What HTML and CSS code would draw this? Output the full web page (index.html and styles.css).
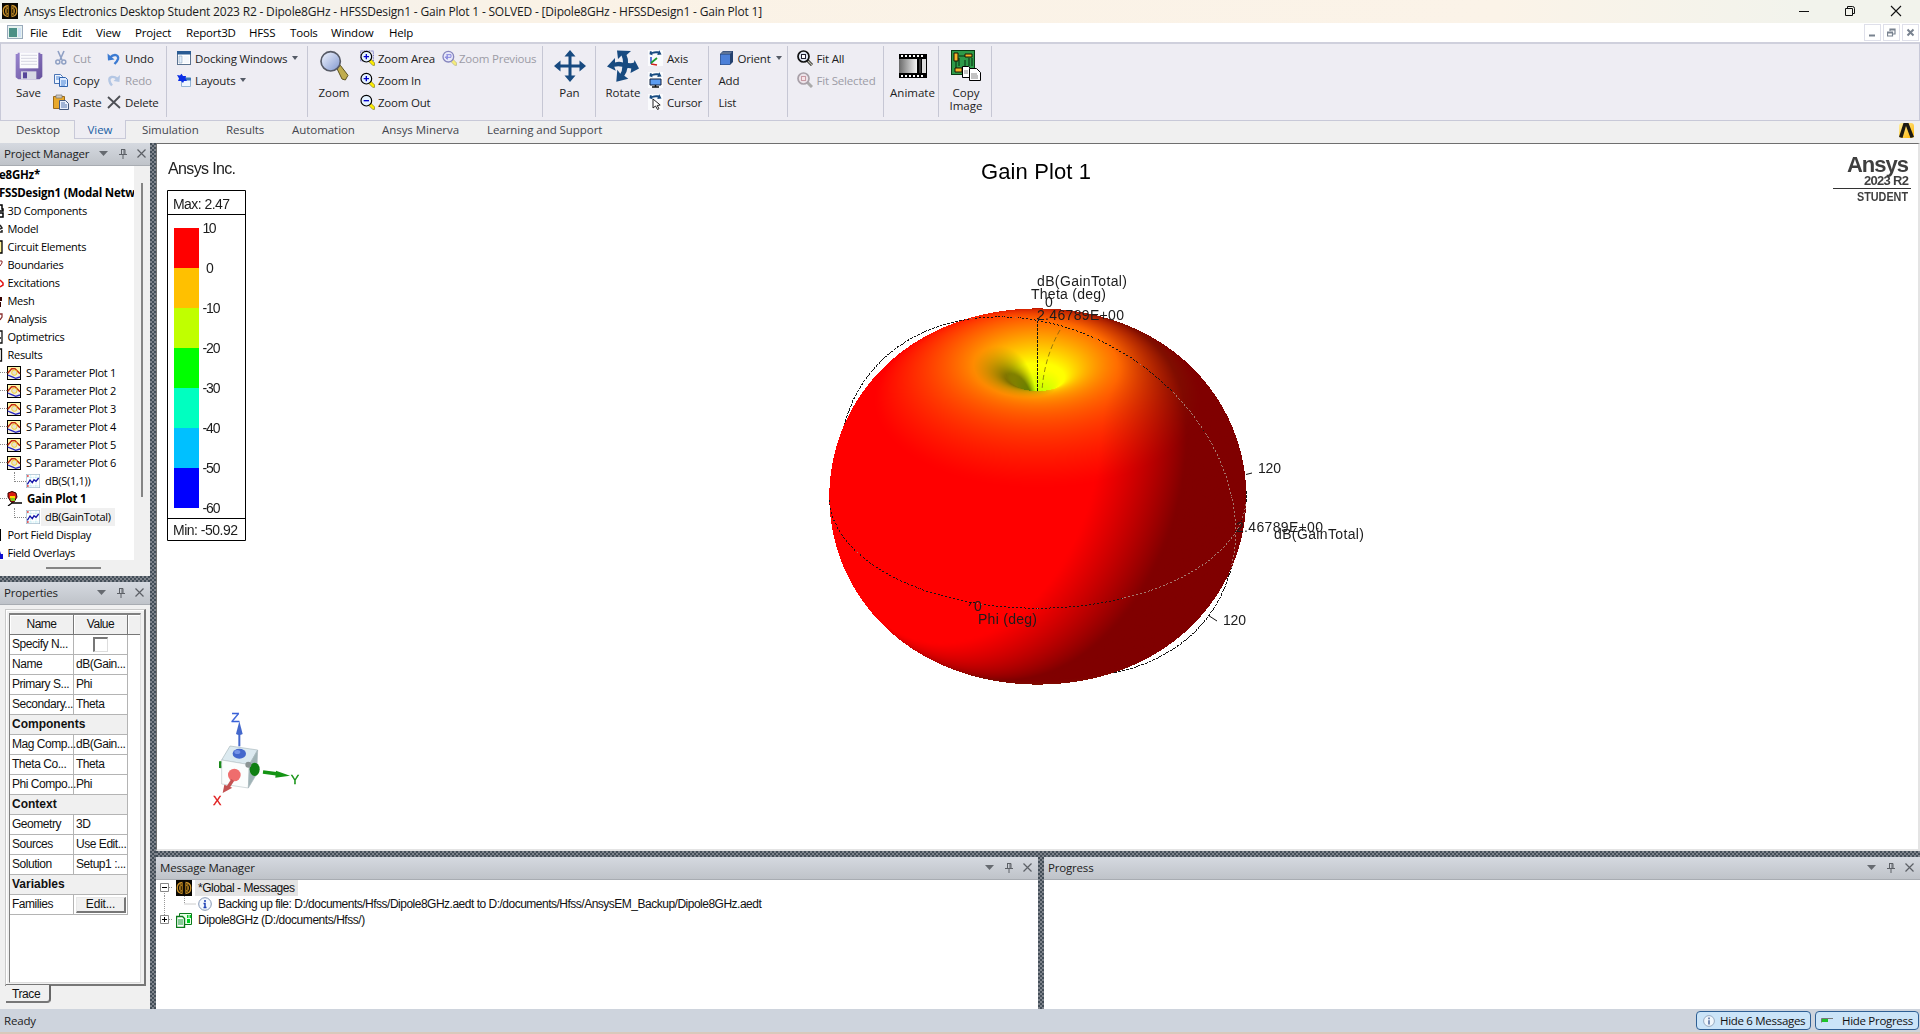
FILE: index.html
```html
<!DOCTYPE html>
<html lang="en">
<head>
<meta charset="utf-8">
<title>Ansys Electronics Desktop Student 2023 R2</title>
<link rel="stylesheet" href="styles.css">
</head>
<body>
<svg class="defs" width="0" height="0">
  <defs>
    <linearGradient id="gLens" x1="0" y1="0" x2="1" y2="1"><stop offset="0" stop-color="#f4f7ff"/><stop offset="1" stop-color="#7f96cf"/></linearGradient>
    <linearGradient id="gSave" x1="0" y1="0" x2="1" y2="1"><stop offset="0" stop-color="#9a86cf"/><stop offset="1" stop-color="#66519c"/></linearGradient>
    <linearGradient id="gFilm" x1="0" y1="0" x2="1" y2="0"><stop offset="0" stop-color="#6a6a6a"/><stop offset="1" stop-color="#f4f4f4"/></linearGradient>
    <linearGradient id="gGold" x1="0" y1="0" x2="1" y2="1"><stop offset="0" stop-color="#fff0a0"/><stop offset="1" stop-color="#ffb400"/></linearGradient>
    <symbol id="antenna" viewBox="0 0 16 16"><rect width="16" height="16" fill="#0a0803"/><g fill="none" stroke="#c8902a" stroke-width="1.300"><path d="M6.500 2.500C-.5 3-.5 13 6.500 13.500M6 5C3 5.500 3 10.500 6 11M9.500 2.500C16.500 3 16.500 13 9.500 13.500M10 5C13 5.500 13 10.500 10 11"/><path d="M6.400 3v10M9.600 3v10M4.500 4v8M11.500 4v8" stroke="#8a6214"/></g></symbol>
    <symbol id="menuarrow" viewBox="0 0 9 5"><path d="M0 0h9L4.500 5z" fill="#666a70"/></symbol>
    <symbol id="pin" viewBox="0 0 8 10"><path d="M2 .5h4v5M2.500 0v5.500M5 1v5M0 5.500h8M4 6v4" fill="none" stroke="#5c6066"/></symbol>
    <symbol id="cross" viewBox="0 0 9 9"><path d="M.5.5l8 8M8.500.5l-8 8" fill="none" stroke="#5c6066" stroke-width="1.200"/></symbol>
    <symbol id="rotarrow" viewBox="0 0 15 7"><path d="M1 1.500h2v1c3-1.200 6-1.200 8-.8l1-1.500 2.500 5-5 .5.8-1.600c-2-.6-4-.6-6.500.4l.2 1.500-3.500-1z" fill="#174a80"/></symbol>
    <symbol id="mag" viewBox="0 0 45 48"><path d="M29 30l3-3 12 12v7h-6L26 34z" fill="#ffee00" stroke="#77741c" stroke-width="2"/><circle cx="19" cy="20" r="16" fill="#e4f2ff" stroke="#000" stroke-width="3.500"/></symbol>
    <symbol id="splot" viewBox="0 0 42 42"><rect x="1.500" y="1.500" width="39" height="39" fill="#fff6a8" stroke="#000" stroke-width="3"/><path d="M3 26c6-12 12-16 18-16s12 6 18 12v17H3z" fill="#f4efdc"/><path d="M2 22L14 8h10l15 15" fill="none" stroke="#c22a10" stroke-width="4.500"/><circle cx="22" cy="20" r="8" fill="#e7e2cc" stroke="#f2d030" stroke-width="3"/><path d="M2 27l12 5 12 5 13-4" fill="none" stroke="#2222c0" stroke-width="4"/></symbol>
    <symbol id="trace" viewBox="0 0 42 42"><rect x="1" y="1" width="40" height="40" fill="#fff" stroke="#9fb6c8" stroke-width="2"/><path d="M2 10h38M2 36h38M14 2v38M30 2v38" stroke="#8fdde8" stroke-width="2" stroke-dasharray="3 3"/><path d="M4 31l8-13 7 8 5-9 6 5 8-10" fill="none" stroke="#1414a8" stroke-width="4"/><path d="M3 4h5v4H3zM3 34h5v4H3z" fill="#e03030"/></symbol>
  </defs>
</svg>
<div class="app">
  <header class="titlebar">
    <svg class="appicon" width="16" height="16"><use href="#antenna"/></svg>
    <span class="apptitle">Ansys Electronics Desktop Student 2023 R2 - Dipole8GHz - HFSSDesign1 - Gain Plot 1 - SOLVED - [Dipole8GHz - HFSSDesign1 - Gain Plot 1]</span>
    <div class="winbtns">
      <svg width="12" height="12"><path d="M1 6.500h10" stroke="#111"/></svg>
      <svg width="12" height="12"><path d="M1.500 3.500h7v7h-7zM3.500 3V1.500h5q2 0 2 2v5H9" fill="none" stroke="#111"/></svg>
      <svg width="12" height="12"><path d="M1 1l10 10M11 1L1 11" stroke="#111" stroke-width="1.100"/></svg>
    </div>
  </header>
  <nav class="menubar">
    <svg class="docicon" width="16" height="14" viewBox="0 0 16 14"><rect x=".5" y=".5" width="15" height="13" fill="#e6f2f0" stroke="#9ab"/><rect x="2" y="3" width="8" height="9" fill="#4a8f86"/><rect x="11" y="3" width="3" height="9" fill="#cfe0f4"/></svg>
    <span class="m1">File</span><span class="m2">Edit</span><span class="m3">View</span><span class="m4">Project</span><span class="m5">Report3D</span><span class="m6">HFSS</span><span class="m7">Tools</span><span class="m8">Window</span><span class="m9">Help</span>
    <div class="mdibtns">
      <i><svg width="9" height="9"><path d="M1 7.500h6" stroke="#78828f" stroke-width="2"/></svg></i>
      <i><svg width="9" height="9"><path d="M.5 4h5v4h-5zM.5 5h5M3 3V1h5v5H6M3 1.800h5" fill="none" stroke="#78828f" stroke-width="1.200"/></svg></i>
      <i><svg width="9" height="9"><path d="M1.500 1.500l6 6M7.500 1.500l-6 6" stroke="#78828f" stroke-width="2"/></svg></i>
    </div>
  </nav>
  <section class="ribbon">
    <div class="group g-edit">
      <div class="big"><svg width="28" height="28" viewBox="40 155 84 86"><path d="M42 162h6v-4h68v4h6v68l-8 8H50l-8-6z" fill="url(#gSave)"/><path d="M54 157h56v48H54z" fill="#fbfbfd"/><path d="M58 166h48M58 175h48M58 184h48M58 193h48" stroke="#c4c4d4" stroke-width="2"/><path d="M58 214h46v23H58z" fill="#d8d8e4"/><path d="M64 217h12v18H64z" fill="#57459a"/></svg><span>Save</span></div>
      <div class="col c-cut">
        <div class="it off"><svg width="16" height="16" viewBox="0 0 16 16"><path d="M5 1l4 9M11 1L7 10" stroke="#8fa0c4" stroke-width="1.600"/><circle cx="4.800" cy="12" r="2" fill="none" stroke="#8fa0c4" stroke-width="1.500"/><circle cx="10.800" cy="12" r="2" fill="none" stroke="#8fa0c4" stroke-width="1.500"/></svg><span>Cut</span></div>
        <div class="it"><svg width="16" height="16" viewBox="0 0 16 16"><path d="M1.500 2.500h6l2 2v7h-8z" fill="#eef5ff" stroke="#4a74b4"/><path d="M6.500 5.500h6l2 2v7h-8z" fill="#dceaff" stroke="#2f62ae"/><path d="M3 5h4M3 7h3M8 9h5M8 11h5M8 13h4" stroke="#4f86d4"/></svg><span>Copy</span></div>
        <div class="it"><svg width="16" height="16" viewBox="0 0 16 16"><path d="M.5 2.500h11v12H.5z" fill="#e9a92c" stroke="#9a6a1c"/><path d="M3 1h6v3H3z" fill="#cfc9bd" stroke="#777" stroke-width=".7"/><path d="M6.500 6.500h6l3 3v6h-9z" fill="#eaf0fb" stroke="#44597e"/><path d="M8 9h4M8 11h6M8 13h6" stroke="#5878b0"/></svg><span>Paste</span></div>
      </div>
      <div class="col c-undo">
        <div class="it"><svg width="14" height="14" viewBox="0 0 14 14"><path d="M3 6.500C7 2.500 12 3.500 11 8q-.5 2-3.500 5" fill="none" stroke="#3c7bd2" stroke-width="2.400"/><path d="M.5 2.500L1 9.500l6.500-1z" fill="#3c7bd2"/></svg><span>Undo</span></div>
        <div class="it off"><svg width="14" height="14" viewBox="0 0 14 14"><path d="M10.500 6C6.500 2.500 1.500 3.500 2.500 8q.3 2 2.500 4.500" fill="none" stroke="#b4c7e4" stroke-width="2.400"/><path d="M13 2l-.6 7L6.500 8z" fill="#b4c7e4"/></svg><span>Redo</span></div>
        <div class="it"><svg width="14" height="14" viewBox="0 0 14 14"><path d="M1 2l12 11M13 1L1 13" stroke="#4d4f55" stroke-width="1.800"/></svg><span>Delete</span></div>
      </div>
    </div>
    <div class="group g-dock">
      <div class="col">
        <div class="it"><svg width="14" height="14" viewBox="0 0 14 14"><rect x=".5" y=".5" width="13" height="13" fill="#fff" stroke="#5c7390"/><path d="M0 0h14v3.500H0z" fill="#2a5c94"/><path d="M2 5h3v7H2z" fill="#e1eefa" stroke="#8ea6bf" stroke-width=".6"/><path d="M6.500 5H12v7H6.500z" fill="#f5f8fc"/></svg><span>Docking Windows</span><svg class="dd" width="6" height="4"><path d="M0 0h6L3 4z" fill="#555b66"/></svg></div>
        <div class="it"><svg width="14" height="14" viewBox="0 0 14 14"><path d="M4.500 4.500h9v9h-9z" fill="#eef6ff" stroke="#94b4d4"/><path d="M5 5h9v2.500H5z" fill="#3c78b8"/><path d="M0 2l3 .5L4.500.8 6 3h3l-.5 2.500L10 8H7l-1 2-2-2H1l1-2.500z" fill="#0a2ee6"/></svg><span>Layouts</span><svg class="dd" width="6" height="4"><path d="M0 0h6L3 4z" fill="#555b66"/></svg></div>
      </div>
    </div>
    <div class="group g-zoom">
      <div class="big"><svg width="30" height="32" viewBox="960 154 90 92"><path d="M1014 208l10-10 23 30-8 14-10-3z" fill="#c0ad4e" stroke="#5e5422" stroke-width="3"/><circle cx="995" cy="186" r="29" fill="url(#gLens)" stroke="#565a66" stroke-width="5"/></svg><span>Zoom</span></div>
      <div class="col c-za">
        <div class="it"><svg width="15" height="16" viewBox="0 0 45 48"><path d="M2 3h38v30H2z" fill="none" stroke="#2222aa" stroke-dasharray="3 2" stroke-width="2"/><use href="#mag" width="45" height="48"/><path d="M11 20h16M19 12v16" stroke="#00c" stroke-width="4"/></svg><span>Zoom Area</span></div>
        <div class="it"><svg width="15" height="16" viewBox="0 0 45 48"><use href="#mag" width="45" height="48"/><path d="M11 20h16M19 12v16" stroke="#00c" stroke-width="4"/></svg><span>Zoom In</span></div>
        <div class="it"><svg width="15" height="16" viewBox="0 0 45 48"><use href="#mag" width="45" height="48"/><path d="M11 20h16" stroke="#00c" stroke-width="4"/></svg><span>Zoom Out</span></div>
      </div>
      <div class="col c-zp"><div class="it off"><svg class="faded" width="15" height="16" viewBox="0 0 45 48"><path d="M29 30l3-3 12 12v7h-6L26 34z" fill="#ffee00" stroke="#77741c" stroke-width="2"/><circle cx="19" cy="20" r="16" fill="#e4e6ff" stroke="#22228a" stroke-width="4"/><path d="M10 22h17V14H13M10 22l6-6v12z" fill="none" stroke="#2222cc" stroke-width="3"/></svg><span>Zoom Previous</span></div></div>
    </div>
    <div class="group g-pan">
      <div class="big"><svg width="32" height="32" viewBox="0 0 32 32"><path d="M16 0l5.500 6.500H17.500V14.500h8V10.500L32 16l-6.500 5.500V17.500h-8v8h4L16 32l-5.500-6.500h4v-8h-8v4L0 16l6.500-5.500v4h8v-8h-4z" fill="#174a80"/></svg><span>Pan</span></div>
    </div>
    <div class="group g-rot">
      <div class="big"><svg width="32" height="32" viewBox="0 0 32 32"><path d="M10 .5L24 1l-4.500 4q2 4 1.500 8 4 .5 6-.5L27.500 10 32 18.500l-8.500 4.500.8-4.500q-2-.6-4-.3-.3 4-3 7.500l4 3-12 3 1-12 3 4q2-3 2-7-4-1-8 0l1.500 4L0 16.500 8 8v4.500q4-1.500 8 0 0-4-1.500-7L11 9z" fill="#174a80"/></svg><span>Rotate</span></div>
      <div class="col">
        <div class="it"><svg width="15" height="16" viewBox="0 0 15 16"><rect width="15" height="16" fill="#fafbfd"/><use href="#rotarrow" width="15" height="6"/><path d="M3 7v7" stroke="#2c50d0" stroke-width="1.500"/><path d="M3 14l6 1" stroke="#d02020" stroke-width="1.700"/><path d="M3 13l6-5" stroke="#1c9a2c" stroke-width="1.700"/></svg><span>Axis</span></div>
        <div class="it"><svg width="15" height="16" viewBox="0 0 15 16"><rect width="15" height="16" fill="#fafbfd"/><use href="#rotarrow" width="15" height="6"/><path d="M2 7h11v6H2z" fill="#5d9cf0" stroke="#102040"/><path d="M4 15h7M7.500 13v2" stroke="#111" stroke-width="1.500"/></svg><span>Center</span></div>
        <div class="it"><svg width="15" height="16" viewBox="0 0 15 16"><rect width="15" height="16" fill="#fafbfd"/><use href="#rotarrow" width="15" height="6"/><path d="M5 5v9l2.500-2 2 3.500 1.500-.8-1.800-3.200 3-.5z" fill="#fff" stroke="#222"/></svg><span>Cursor</span></div>
      </div>
    </div>
    <div class="group g-ori">
      <div class="col">
        <div class="it"><svg width="15" height="16" viewBox="0 0 15 16"><path d="M1 4l3-3h10v11l-3 3H1z" fill="#24416f"/><path d="M1.500 4.500h9.500v10H1.500z" fill="#4c80d8"/><path d="M1.500 4L4 1.500h9.500L11 4z" fill="#5d7396"/></svg><span>Orient</span><svg class="dd" width="6" height="4"><path d="M0 0h6L3 4z" fill="#555b66"/></svg></div>
        <div class="it"><span>Add</span></div>
        <div class="it"><span>List</span></div>
      </div>
    </div>
    <div class="group g-fit">
      <div class="col">
        <div class="it"><svg width="16" height="16" viewBox="0 0 16 16"><path d="M10 10l5 5" stroke="#222" stroke-width="3"/><path d="M11 11l4 4" stroke="#b8b8a8" stroke-width="1.200"/><circle cx="6.500" cy="6.500" r="5.500" fill="#dfe6f2" stroke="#111" stroke-width="1.700"/><rect x="4.500" y="4.500" width="4" height="4" fill="#fff" stroke="#223"/></svg><span>Fit All</span></div>
        <div class="it off"><svg width="16" height="16" viewBox="0 0 16 16"><path d="M10 10l5 5" stroke="#aaa" stroke-width="3"/><circle cx="6.500" cy="6.500" r="5.500" fill="#ece2e8" stroke="#a8a0a8" stroke-width="1.700"/><rect x="4.500" y="4.500" width="4" height="4" fill="#f6e4e8" stroke="#c89aa4"/></svg><span>Fit Selected</span></div>
      </div>
    </div>
    <div class="group g-ani">
      <div class="big"><svg width="28" height="24" viewBox="0 0 28 24"><rect width="28" height="24" fill="#000"/><path d="M2 2h24M2 22h24" stroke="#fff" stroke-width="2" stroke-dasharray="2 2"/><rect y="5" width="18" height="14" fill="url(#gFilm)"/><rect x="20" y="5" width="2" height="14" fill="#333"/><rect x="23" y="5" width="4" height="14" fill="#ddd"/></svg><span>Animate</span></div>
    </div>
    <div class="group g-cpy">
      <div class="big"><svg width="30" height="32" viewBox="0 0 30 32"><rect x=".5" y=".5" width="23" height="24" fill="#2e9a48" stroke="#0a3a14"/><path d="M8 6h6M8 8v8M5 10v8M14 10v6M18 8v8M21 8v8M8 19h6" stroke="#062a0c" stroke-width="1"/><path d="M3 3h4v8H3zM14 4h7v3h-7zM4 18h7v4H4z" fill="#f6b32a" stroke="#1c1400"/><path d="M11.500 16.500h6l2 2v9h-8z" fill="#fff" stroke="#000"/><path d="M18.500 18.500h7l4 4v8h-11z" fill="#fff" stroke="#000"/><path d="M13 21h4M13 23h4M20 24h6M20 26h7M20 28h7" stroke="#888"/></svg><span>Copy<br>Image</span></div>
    </div>
  </section>
  <nav class="tabs">
    <span class="t1">Desktop</span><span class="active">View</span><span class="t3">Simulation</span><span class="t4">Results</span><span class="t5">Automation</span><span class="t6">Ansys Minerva</span><span class="t7">Learning and Support</span>
    <svg class="ansyslogo" width="17" height="17" viewBox="0 0 17 17"><rect x="1" y="1" width="15" height="15" rx="3" fill="url(#gGold)"/><path d="M5.500 1h5L16 15l-3.500 1L8 4 4.500 16 1 15z" fill="#1c1a12"/></svg>
  </nav>
  <main class="workspace">
    <aside class="left">
      <div class="phead"><span>Project Manager</span><svg width="9" height="5"><use href="#menuarrow"/></svg><svg width="8" height="10"><use href="#pin"/></svg><svg width="9" height="9"><use href="#cross"/></svg></div>
      <div class="treewrap">
        <div class="tree">
          <div class="row b r-root"><span>e8GHz*</span></div>
          <div class="row b r-des"><span>FSSDesign1 (Modal Netw</span></div>
          <div class="row"><svg width="4" height="14"><path d="M0 1h2v4h1v2H0M0 9h3v4H0" fill="none" stroke="#000" stroke-width="1.500"/></svg><span>3D Components</span></div>
          <div class="row"><svg width="4" height="14"><path d="M0 3l2 3-2 1M0 10h2v-2" fill="none" stroke="#222" stroke-width="1.500"/></svg><span>Model</span></div>
          <div class="row"><svg width="4" height="14"><path d="M0 1h2v12H0" fill="#fff29a" stroke="#000" stroke-width="1.300"/></svg><span>Circuit Elements</span></div>
          <div class="row"><svg width="4" height="14"><path d="M0 3h2v2L0 8" fill="none" stroke="#8a2020"/></svg><span>Boundaries</span></div>
          <div class="row"><svg width="4" height="14"><path d="M0 4l3 3v2l-3 2" fill="none" stroke="#e01010" stroke-width="1.500"/></svg><span>Excitations</span></div>
          <div class="row"><svg width="4" height="14"><path d="M0 3h2v4H0zM0 8h1v5H0z" fill="#300"/></svg><span>Mesh</span></div>
          <div class="row"><svg width="4" height="14"><path d="M0 2h2v3L0 8" fill="none" stroke="#8a3030" stroke-width="1.300"/></svg><span>Analysis</span></div>
          <div class="row"><svg width="4" height="14"><path d="M0 1h2v12H0M0 8h1" fill="none" stroke="#111" stroke-width="1.300"/></svg><span>Optimetrics</span></div>
          <div class="row"><svg width="4" height="14"><path d="M0 1h1.500v12H0" fill="none" stroke="#111" stroke-width="1.300"/></svg><span>Results</span></div>
          <div class="row plot"><i></i><svg width="14" height="14"><use href="#splot"/></svg><span>S Parameter Plot 1</span></div>
          <div class="row plot"><i></i><svg width="14" height="14"><use href="#splot"/></svg><span>S Parameter Plot 2</span></div>
          <div class="row plot"><i></i><svg width="14" height="14"><use href="#splot"/></svg><span>S Parameter Plot 3</span></div>
          <div class="row plot"><i></i><svg width="14" height="14"><use href="#splot"/></svg><span>S Parameter Plot 4</span></div>
          <div class="row plot"><i></i><svg width="14" height="14"><use href="#splot"/></svg><span>S Parameter Plot 5</span></div>
          <div class="row plot"><i></i><svg width="14" height="14"><use href="#splot"/></svg><span>S Parameter Plot 6</span></div>
          <div class="row sub"><i></i><svg width="14" height="14"><use href="#trace"/></svg><span>dB(S(1,1))</span></div>
          <div class="row b plot"><i></i><svg width="15" height="15" viewBox="0 0 15 15"><path d="M5 9v3l-4 3M5 12h10" fill="none" stroke="#000" stroke-width="1.300"/><path d="M1 2q4-3 8 0l1 4-3 5H4L1 6z" fill="#d81c10" stroke="#300"/><path d="M3 6h5v4H4z" fill="#7ac81c"/><path d="M3 5h5v2H3z" fill="#ffd400"/></svg><span>Gain Plot 1</span></div>
          <div class="row sub sel"><i></i><svg width="14" height="14"><use href="#trace"/></svg><span>dB(GainTotal)</span></div>
          <div class="row"><svg width="4" height="14"><path d="M0 1h1v12H0z"/></svg><span>Port Field Display</span></div>
          <div class="row"><svg width="4" height="14"><path d="M0 5l1 3h2v5H0z" fill="#1010d0"/></svg><span>Field Overlays</span></div>
        </div>
        <div class="vbar"></div>
      </div>
      <div class="hbarbox"><div class="hbar"></div></div>
      <div class="hsplit"></div>
      <div class="phead"><span>Properties</span><svg width="9" height="5"><use href="#menuarrow"/></svg><svg width="8" height="10"><use href="#pin"/></svg><svg width="9" height="9"><use href="#cross"/></svg></div>
      <div class="props">
        <div class="sheet">
          <div class="grid">
            <div class="hrow"><b>Name</b><b>Value</b><b></b></div>
            <div class="prow"><span>Specify N...</span><span class="chk"><i></i></span></div>
            <div class="prow"><span>Name</span><span>dB(Gain...</span></div>
            <div class="prow"><span>Primary S...</span><span>Phi</span></div>
            <div class="prow"><span>Secondary...</span><span>Theta</span></div>
            <div class="crow">Components</div>
            <div class="prow"><span>Mag Comp...</span><span>dB(Gain...</span></div>
            <div class="prow"><span>Theta Co...</span><span>Theta</span></div>
            <div class="prow"><span>Phi Compo...</span><span>Phi</span></div>
            <div class="crow">Context</div>
            <div class="prow"><span>Geometry</span><span>3D</span></div>
            <div class="prow"><span>Sources</span><span>Use Edit...</span></div>
            <div class="prow"><span>Solution</span><span>Setup1 :...</span></div>
            <div class="crow">Variables</div>
            <div class="prow"><span>Families</span><span class="bt"><em>Edit...</em></span></div>
          </div>
        </div>
        <div class="ttab">Trace</div>
      </div>
    </aside>
    <div class="vsplit"></div>
    <div class="right">
      <section class="view">
        <canvas id="pattern" class="pattern" width="440" height="400"></canvas>
        <svg class="overlay" width="1762" height="706" viewBox="157 144 1762 706">
          <g class="arial">
            <text x="168" y="174" font-size="16" textLength="68" fill="#222">Ansys Inc.</text>
            <text x="981" y="179" font-size="22" textLength="110" fill="#000">Gain Plot 1</text>
            <path d="M167.500 190.500h78v350h-78zM167 214.500h79M167 518.500h79" fill="none" stroke="#000"/>
            <text x="173" y="209" font-size="14" textLength="57">Max: 2.47</text>
            <text x="173" y="535" font-size="14" textLength="65">Min: -50.92</text>
            <g stroke="none"><path d="M174 228h25v40h-25z" fill="#f00"/><path d="M174 268h25v40h-25z" fill="#ffc000"/><path d="M174 308h25v40h-25z" fill="#c0ff00"/><path d="M174 348h25v40h-25z" fill="#0f0"/><path d="M174 388h25v40h-25z" fill="#00ffc0"/><path d="M174 428h25v40h-25z" fill="#00c0ff"/><path d="M174 468h25v40h-25z" fill="#00f"/></g>
            <g font-size="14"><text x="202.500" y="233" textLength="14">10</text><text x="206" y="273">0</text><text x="202.500" y="313" textLength="18">-10</text><text x="202.500" y="353" textLength="18">-20</text><text x="202.500" y="393" textLength="18">-30</text><text x="202.500" y="433" textLength="18">-40</text><text x="202.500" y="473" textLength="18">-50</text><text x="202.500" y="513" textLength="18">-60</text></g>
            <g font-size="14">
              <text x="1037" y="285.500" textLength="90">dB(GainTotal)</text>
              <text x="1031" y="298.500" textLength="75">Theta (deg)</text>
              <text x="1045" y="306.500">0</text>
              <text x="1037" y="319.500" textLength="87">2.46789E+00</text>
              <text x="1258" y="472.500" textLength="23">120</text>
              <text x="1236" y="531.500" textLength="87">2.46789E+00</text>
              <text x="1274" y="538.500" textLength="90">dB(GainTotal)</text>
              <text x="1223" y="624.500" textLength="23">120</text>
              <text x="974" y="610.500">0</text>
              <text x="978" y="623.500" textLength="59">Phi (deg)</text>
            </g>
            <path d="M1246 474.500l6-1.500M1208.500 615.500l8.500 5.500M969 606l2.500-4" stroke="#111" fill="none"/>
            <path d="M1060 330q-16 28-18 61" stroke="#6b5a10" stroke-opacity=".7" stroke-dasharray="5 3" fill="none"/>
            <g font-weight="bold" fill="#3f3f3f"><text x="1847" y="172" font-size="22" textLength="62">Ansys</text><text x="1864" y="185" font-size="13" textLength="45">2023 R2</text><text x="1857" y="201" font-size="13" textLength="51" lengthAdjust="spacingAndGlyphs">STUDENT</text></g>
            <path d="M1833 188.500h78" stroke="#333"/>
          </g>
        </svg>
        <svg class="triad" width="107" height="100" viewBox="600 400 321 300">
          <path d="M660 560v20M665 560q-6 8 0 20" stroke="#1a8a1a" stroke-width="6" fill="none"/>
          <path d="M665 556l25-42 83 12-25 44z" fill="#dceaf0" stroke="#a9b8bd" stroke-width="2"/>
          <path d="M665 556l83 14-3 70-80-12z" fill="#fbfdfd" stroke="#bcc8cc" stroke-width="2"/>
          <path d="M748 570l25-44-3 72-25 42z" fill="#9fb3b6" stroke="#a9b8bd" stroke-width="2"/>
          <ellipse cx="764" cy="584" rx="15" ry="20" fill="#0f7f12"/>
          <circle cx="745" cy="570" r="9" fill="#8b9494"/>
          <ellipse cx="718" cy="537" rx="20" ry="15" fill="#4468cc"/><ellipse cx="712" cy="532" rx="9" ry="6" fill="#7492e6"/>
          <path d="M718 515v-42" stroke="#4468cc" stroke-width="6"/><path d="M708 478l10-38 10 38q-10 6-20 0z" fill="#4468cc"/>
          <circle cx="703" cy="601" r="19" fill="#ef6d6d"/><path d="M698 616l-14 22" stroke="#c35252" stroke-width="10"/><path d="M673 630l24 9-29 16z" fill="#c35252"/>
          <path d="M789 592l45 6" stroke="#149414" stroke-width="10"/><path d="M828 588l42 15-44 6z" fill="#149414"/>
          <text x="694" y="441" font-size="41" fill="#3a62d8" stroke="#3a62d8">Z</text><text x="872" y="627" font-size="38" fill="#109010" stroke="#109010">Y</text><text x="639" y="690" font-size="38" fill="#e01818" stroke="#e01818">X</text>
        </svg>
      </section>
      <div class="hsplit"></div>
      <div class="bottom">
        <section class="msgs">
          <div class="phead"><span>Message Manager</span><svg width="9" height="5"><use href="#menuarrow"/></svg><svg width="8" height="10"><use href="#pin"/></svg><svg width="9" height="9"><use href="#cross"/></svg></div>
          <div class="mtree">
            <div class="mrow"><svg width="16" height="16"><path d="M4.500 3.500h8v8h-8z" fill="#fff" stroke="#888"/><path d="M6 7.500h5" stroke="#000"/><path d="M13 7.500h3M8.500 13v3" stroke="#999" stroke-dasharray="1 1"/></svg><svg class="gap4" width="16" height="16"><use href="#antenna"/></svg><span class="gl">*Global - Messages</span></div>
            <div class="mrow"><svg width="42" height="16"><path d="M8.500 0v16M28.500 0v8h12" stroke="#999" fill="none" stroke-dasharray="1 1"/></svg><svg width="14" height="14" viewBox="0 0 14 14"><circle cx="7" cy="7" r="6.300" fill="#f4f8fd" stroke="#8496b4"/><path d="M7 3v2M5.500 6.500H7v4M5.500 10.500h3" stroke="#1c3fb4" stroke-width="1.500" fill="none"/></svg><span class="bk">Backing up file: D:/documents/Hfss/Dipole8GHz.aedt to D:/documents/Hfss/AnsysEM_Backup/Dipole8GHz.aedt</span></div>
            <div class="mrow"><svg width="16" height="16"><path d="M4.500 3.500h8v8h-8z" fill="#fff" stroke="#888"/><path d="M6 7.500h5M8.500 5v5" stroke="#000"/><path d="M13 7.500h3M8.500 0v3" stroke="#999" stroke-dasharray="1 1"/></svg><svg class="gap4" width="16" height="15" viewBox="0 0 16 15"><path d="M3.500.5h12v11h-12z" fill="#eaffea" stroke="#0a7a1a"/><path d="M11 2h1.500v3H11zM13.500 2H15v3h-1.500zM11 6h3v4h-3z" fill="#0c2"/><path d="M.5 3.500h6l2 2v9h-8z" fill="#fff" stroke="#0a7a1a" stroke-width="1.400"/><path d="M2 7h5M2 9h5M2 11h5" stroke="#0a9a2a"/></svg><span class="dp">Dipole8GHz (D:/documents/Hfss/)</span></div>
          </div>
        </section>
        <div class="vsplit"></div>
        <section class="progress"><div class="phead"><span>Progress</span><svg width="9" height="5"><use href="#menuarrow"/></svg><svg width="8" height="10"><use href="#pin"/></svg><svg width="9" height="9"><use href="#cross"/></svg></div></section>
      </div>
    </div>
  </main>
  <footer class="status">
    <span>Ready</span>
    <div class="sbtn s1"><svg width="12" height="12" viewBox="0 0 14 14"><circle cx="7" cy="7" r="6.300" fill="#f0f6fc" stroke="#8ea0b8"/><path d="M7 3v2M7 6v5" stroke="#34518c" stroke-width="1.500"/></svg><em>Hide 6 Messages</em></div>
    <div class="sbtn s2"><svg width="12" height="6"><path d="M.5 4.500v-4H12" fill="none" stroke="#777"/><path d="M1 1h6v3H1z" fill="#1ec42a"/></svg><em>Hide Progress</em></div>
  </footer>
</div>
<script src="pattern.js"></script>
</body>
</html>
```

FILE: styles.css
```css
* { box-sizing: border-box; }
html { overflow: hidden; }
body { margin: 0; background: #f0f0f0; font-family: "Open Sans", "Noto Sans", sans-serif; font-size: 11.5px; letter-spacing: -0.18px; color: #1c1c22; }
.defs { position: absolute; }
.app { width: 1920px; height: 1034px; display: flex; flex-direction: column; overflow: hidden; }
span, em, b { white-space: nowrap; }
em { font-style: normal; }
svg { flex: none; display: block; }

.titlebar { height: 23px; flex: none; display: flex; align-items: center; padding: 0 18px 2px 2px; background: linear-gradient(90deg, #f0f3f0 0, #f4f2ec 300px, #faf2e6 520px, #fbf3e8 1500px, #f2f3ec 1800px); }
.apptitle { margin-left: 6px; color: #1a1a1a; font-size: 12px; letter-spacing: -0.19px; padding-top: 2px; }
.winbtns { margin-left: auto; display: flex; gap: 34px; }

.menubar { height: 19px; flex: none; background: #fff; display: flex; align-items: center; color: #000; padding-bottom: 1px; }
.docicon { margin: 0 7px; }
.menubar span { flex: none; }
.m1 { width: 32px; } .m2 { width: 34px; } .m3 { width: 39px; } .m4 { width: 51px; } .m5 { width: 63px; } .m6 { width: 41px; } .m7 { width: 41px; } .m8 { width: 58px; }
.mdibtns { margin-left: auto; display: flex; gap: 2px; padding-right: 1px; }
.mdibtns i { width: 17px; height: 17px; border: 1px solid #dfe0ea; background: #fff; display: flex; align-items: center; justify-content: center; }

.ribbon { height: 79px; flex: none; background: #eeedf3; border: 1px solid #c8c9d8; border-top: 2px solid #cfd0dc; display: flex; padding: 2px 0 4px; }
.group { border-right: 1px solid #c6c7d4; display: flex; height: 71px; flex: none; }
.g-edit { width: 166px; } .g-dock { width: 141px; padding-left: 10px; } .g-zoom { width: 235px; } .g-pan { width: 53px; } .g-rot { width: 113px; } .g-ori { width: 79px; padding-left: 9px; } .g-fit { width: 96px; padding-left: 8px; } .g-ani { width: 55px; } .g-cpy { width: 53px; }
.big { width: 52px; display: flex; flex-direction: column; align-items: center; flex: none; padding-top: 4px; }
.big svg { height: 32px; }
.big span { text-align: center; line-height: 13px; margin-top: 4px; letter-spacing: 0; }
.g-edit .big { padding-left: 3px; }
.g-pan .big { padding-left: 1px; }
.g-rot .big { padding-left: 2px; }
.g-ani .big { width: 57px; }
.g-cpy .big { width: 54px; }
.col { display: flex; flex-direction: column; padding-top: 1px; }
.g-ori .col, .g-fit .col { margin-left: 0.5px; }
.it { height: 22px; display: flex; align-items: center; }
.it svg + span { margin-left: 4px; }
.it > span:first-child { margin-left: 0; }
.off span { color: #9c9ca6; }
.faded { opacity: .5; }
.dd { margin-left: 5px; }
.c-cut { width: 54px; }
.c-za { width: 82px; }
.c-za, .c-zp { letter-spacing: -0.22px; }
.c-za .it svg + span { margin-left: 3px; }
.c-zp .it svg + span { margin-left: 2px; }

.tabs { height: 22px; flex: none; background: #f0f0f0; display: flex; align-items: flex-start; color: #44464e; line-height: 18px; letter-spacing: -0.05px; }
.tabs span { flex: none; }
.t1 { width: 74px; padding-left: 16px; }
.active { width: 52px; height: 19px; text-align: center; background: #eeedf3; color: #1a5fa4; border: 1px solid #c8c9d8; border-top: 0; margin-top: -1px; padding-top: 1px; }
.t3 { width: 100px; padding-left: 16px; } .t4 { width: 66px; } .t5 { width: 90px; } .t6 { width: 105px; }
.ansyslogo { margin-left: auto; margin-right: 5px; margin-top: 1px; }

.workspace { height: 866px; flex: none; display: flex; }
.left { width: 150px; flex: none; display: flex; flex-direction: column; background: #f0f0f0; overflow: hidden; }
.vsplit, .hsplit { flex: none; background-color: #7f848c; background-image: radial-gradient(circle at 1px 1px, #434e58 1px, transparent 1.200px), radial-gradient(circle at 3px 3px, #434e58 1px, transparent 1.200px); background-size: 4px 4px; }
.vsplit { width: 6px; }
.hsplit { height: 6px; }
.phead { height: 23px; flex: none; background: linear-gradient(#d5d9e0, #bfc3c9); border-bottom: 1px solid #a8acb2; display: flex; align-items: center; padding: 0 6px 1px 4px; }
.phead span { flex: 1; color: #222; }
.phead svg { margin-left: 10px; }
.phead svg + svg { margin-left: 11px; }
.phead svg:last-child { margin-left: 10px; }

.treewrap { display: flex; height: 394px; flex: none; }
.tree { width: 134px; background: #fff; overflow: hidden; font-size: 11px; color: #000; }
.row { height: 18px; display: flex; align-items: center; letter-spacing: -0.28px; padding-bottom: 1px; }
.row span { margin-left: 3.500px; }
.row.b { font-weight: bold; font-size: 11.5px; letter-spacing: -0.22px; }
.r-root span, .r-des span { margin-left: -1px; }
.plot i { width: 7px; border-top: 1px dotted #888; }
.plot span, .sub span { margin-left: 5px; }
.plot i, .sub i { flex: none; }
.sub i { width: 12px; height: 10px; margin: -8px 0 0 14px; border-left: 1px dotted #888; border-bottom: 1px dotted #888; }
.sel span { background: #f0f0f0; padding: 0 4px; margin-left: 1px; line-height: 18px; }
.vbar { width: 2px; height: 314px; background: #858585; margin: 17px 0 0 7px; }
.hbarbox { height: 16px; flex: none; padding: 7px 0 0 46px; }
.hbar { width: 55px; height: 2px; background: #858585; }

.props, .mtree { font-family: "Liberation Sans", Arial, sans-serif; font-size: 12px; color: #111; }
.props { padding: 4px 4px 0 5px; flex: 1; }
.sheet { height: 377px; border: 1px solid #c9c9c9; border-right: 2px solid #777; border-bottom: 2px solid #777; padding: 3px; box-shadow: inset 1px 1px #fff; }
.grid { height: 370px; background: #fff; border: 1px solid #808080; border-top-width: 2px; border-bottom-color: #ddd; border-right-color: #ddd; }
.hrow { display: grid; grid-template-columns: 64px 54px 1fr; height: 20px; }
.hrow b { font-weight: normal; text-align: center; background: #f0f0f0; border-right: 1px solid #777; border-bottom: 1px solid #777; line-height: 18px; box-shadow: inset 1px 1px #fff; letter-spacing: -0.5px; }
.hrow b:last-child { border-right: 0; }
.prow { display: grid; grid-template-columns: 64px 54px; height: 20px; width: 118px; }
.prow span { border-right: 1px solid #b4b4b4; border-bottom: 1px solid #b4b4b4; line-height: 18px; padding-left: 2px; letter-spacing: -0.46px; }
.crow { width: 118px; height: 20px; background: #f0f0f0; border-bottom: 1px solid #b4b4b4; border-right: 1px solid #b4b4b4; font-weight: bold; letter-spacing: 0; line-height: 18px; padding-left: 2px; }
.chk i { display: block; width: 15px; height: 15px; margin: 2px 0 0 17px; border: 1px solid #ddd; border-top: 2px solid #777; border-left: 2px solid #777; }
.prow .bt { padding: 2px 1px 1px 2px; }
.bt em { display: block; height: 16px; line-height: 13px; text-align: center; background: #f0f0f0; border: 1px solid #e8e8e8; border-right: 2px solid #777; border-bottom: 2px solid #777; letter-spacing: -0.2px; }
.ttab { width: 45px; height: 18px; margin: -1px 0 0 1px; border-right: 2px solid #666; border-bottom: 2px solid #777; border-radius: 0 0 4px 0; background: #f0f0f0; padding-left: 6px; line-height: 18px; letter-spacing: -0.4px; }

.right { flex: 1; display: flex; flex-direction: column; min-width: 0; }
.view { height: 708px; flex: none; background: #fff; border: 1px solid #6f6f6f; border-right: 2px solid #e4e4e4; border-bottom: 2px solid #e4e4e4; position: relative; }
.pattern { position: absolute; left: 661px; top: 152px; }
.overlay { position: absolute; left: 0; top: 0; letter-spacing: 0; }
.arial, .triad { font-family: "Liberation Sans", Arial, sans-serif; fill: #1c1c1c; }
.triad { position: absolute; left: 43px; top: 563.5px; letter-spacing: 0; }
.bottom { flex: 1; display: flex; }
.msgs { width: 882px; display: flex; flex-direction: column; background: #fff; }
.progress { flex: 1; background: #fff; }
.mrow { height: 16px; display: flex; align-items: center; letter-spacing: -0.5px; }
.gap4 { margin-left: 4px; }
.mrow span { margin-left: 6px; line-height: 16px; }
.mrow .gl { background: #e4e4e4; margin-left: 3px; padding: 0 3px; }
.mrow .gl, .mrow .dp { letter-spacing: -0.45px; }

.status { height: 25px; flex: none; background: #ced4dd; border-bottom: 2px solid #d9c9bb; display: flex; align-items: center; padding: 0 1px 0 4px; }
.status > span { flex: 1; }
.sbtn { height: 19px; border: 1px solid #2e5f94; border-radius: 4px; background: #cbe4f8; display: flex; align-items: center; color: #111; letter-spacing: -0.3px; }
.s1 { width: 115px; margin-right: 4px; padding-left: 6px; } .s1 em { margin-left: 5px; }
.s2 { width: 104px; padding-left: 5px; } .s2 em { margin-left: 9px; }
```

FILE: pattern.js
```js
// 3D far-field gain surface of a half-wave dipole, drawn with a z-buffer.
(function () {
  var cv = document.getElementById('pattern');
  var W = cv.width, H = cv.height, g = cv.getContext('2d');
  var img = g.createImageData(W, H), px = img.data;
  var zb = new Float32Array(W * H).fill(-9);
  var CX = 219.3, CY = 200, R = 208.5, EL = 32.4 * Math.PI / 180;
  var sE = Math.sin(EL), cE = Math.cos(EL);
  var L = [-0.741, 0.221, 0.634];

  function gainDb(t) {
    var s = Math.sin(t);
    if (s < 1e-4) return -50.92;
    var f = Math.abs(Math.cos(Math.PI / 2 * Math.cos(t)) / s);
    return Math.max(-50.92, 2.47 + 20 * Math.log10(f));
  }
  function point(r, t, p) {
    var z = r * Math.cos(t), q = r * Math.sin(t);
    var x = q * Math.sin(p), d = q * Math.cos(p);
    return [x, z * cE - d * sE, d * cE + z * sE];
  }
  function surf(t, p) { return point((gainDb(t) + 50.92) / 53.39, t, p); }
  function color(db) {
    var k = Math.max(0, -db) * 18;
    return [Math.max(0, 255 - Math.max(0, k - 275) * 0.6), Math.min(255, k)];
  }
  function vertex(t, p) {
    var a = surf(t, p), e = 0.002;
    var b = surf(t + e, p), c = surf(t, p + e);
    var u = [b[0] - a[0], b[1] - a[1], b[2] - a[2]];
    var v = [c[0] - a[0], c[1] - a[1], c[2] - a[2]];
    var n = [u[1] * v[2] - u[2] * v[1], u[2] * v[0] - u[0] * v[2], u[0] * v[1] - u[1] * v[0]];
    var l = Math.hypot(n[0], n[1], n[2]) || 1;
    var nl = (n[0] * L[0] + n[1] * L[1] + n[2] * L[2]) / l;
    var b2 = Math.min(1, 0.5 + 1.09 * Math.max(0, nl));
    var k = color(gainDb(t));
    return [CX + a[0] * R, CY - a[1] * R, a[2], k[0] * b2, k[1] * b2];
  }
  function tri(a, b, c) {
    var x0 = Math.max(0, Math.floor(Math.min(a[0], b[0], c[0]))), x1 = Math.min(W - 1, Math.ceil(Math.max(a[0], b[0], c[0])));
    var y0 = Math.max(0, Math.floor(Math.min(a[1], b[1], c[1]))), y1 = Math.min(H - 1, Math.ceil(Math.max(a[1], b[1], c[1])));
    var d = (b[1] - c[1]) * (a[0] - c[0]) + (c[0] - b[0]) * (a[1] - c[1]);
    if (!d) return;
    for (var y = y0; y <= y1; y++) for (var x = x0; x <= x1; x++) {
      var w0 = ((b[1] - c[1]) * (x - c[0]) + (c[0] - b[0]) * (y - c[1])) / d;
      var w1 = ((c[1] - a[1]) * (x - c[0]) + (a[0] - c[0]) * (y - c[1])) / d;
      var w2 = 1 - w0 - w1;
      if (w0 < -1e-4 || w1 < -1e-4 || w2 < -1e-4) continue;
      var z = w0 * a[2] + w1 * b[2] + w2 * c[2], i = y * W + x;
      if (z <= zb[i]) continue;
      zb[i] = z;
      px[i * 4] = w0 * a[3] + w1 * b[3] + w2 * c[3];
      px[i * 4 + 1] = w0 * a[4] + w1 * b[4] + w2 * c[4];
      px[i * 4 + 2] = 0;
      px[i * 4 + 3] = 255;
    }
  }
  var NT = 180, NP = 240, grid = [], i, j;
  for (i = 0; i <= NT; i++) {
    grid[i] = [];
    // rows are packed towards the poles, where the radius changes fastest
    var s = i / NT, t = Math.PI * (s - Math.sin(2 * Math.PI * s) / (2 * Math.PI) * 0.9);
    t = Math.min(Math.PI - 0.004, Math.max(0.004, t));
    for (j = 0; j <= NP; j++) grid[i][j] = vertex(t, j / NP * 2 * Math.PI);
  }
  for (i = 0; i < NT; i++) for (j = 0; j < NP; j++) {
    tri(grid[i][j], grid[i + 1][j], grid[i][j + 1]);
    tri(grid[i + 1][j], grid[i + 1][j + 1], grid[i][j + 1]);
  }

  function dot(x, y, z) {
    x = Math.round(x); y = Math.round(y);
    if (x < 0 || y < 0 || x >= W || y >= H) return;
    var k = y * W + x, o = k * 4;
    if (z < zb[k] - 0.02) return;
    var dark = zb[k] > -9 && px[o] < 150;
    px[o] = dark ? 165 : 20; px[o + 1] = dark ? 120 : 20; px[o + 2] = dark ? 110 : 20; px[o + 3] = 255;
  }
  function curve(fn) {
    var len = 0, prev = null, last = -1;
    for (var k = 0; k <= 6000; k++) {
      var q = fn(k / 6000 * 2 * Math.PI), X = CX + q[0] * R, Y = CY - q[1] * R;
      if (prev) len += Math.hypot(X - prev[0], Y - prev[1]);
      prev = [X, Y];
      var n = Math.floor(len);
      if (n !== last) { last = n; if (n % 4 < 2 || (zb[Math.round(Y) * W + Math.round(X)] === -9 && n % 4 < 3)) dot(X, Y, q[2]); }
    }
  }
  curve(function (a) { return point(1, Math.PI / 2, a); });
  curve(function (a) { return point(1, a, 71.5 * Math.PI / 180); });
  for (i = 22; i < 95; i++) if (i % 4 < 3) dot(CX, i, 9);
  g.putImageData(img, 0, 0);
})();
```
